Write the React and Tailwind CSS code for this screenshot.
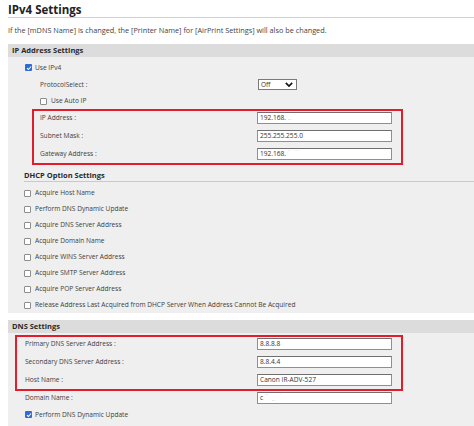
import React from 'react';

const Check = ({checked}) => (
    checked ? (
        <span className="flex w-[7px] h-[7px] shrink-0 items-center justify-center rounded-[1px] bg-[#2f6bd3]">
            <svg viewBox="0 0 8 8" className="w-[6px] h-[6px]">
                <path d="M1.3 4.2 L3.2 6 L6.8 2" fill="none" stroke="#fff" strokeWidth="1.4" />
            </svg>
        </span>
    ) : (
        <span className="w-[7px] h-[7px] shrink-0 rounded-[1px] border border-[#8c8c8c] bg-white" />
    )
);

const Field = ({children}) => (
    <div className="mt-[1px] h-[12px] w-[135px] border border-[#8f8f8f] border-t-[#6f6f6f] bg-white px-[2px] text-[6.6px] leading-[10px] text-[#333]">
        {children}
    </div>
);

const Row = ({label, width, children}) => (
    <div className="flex h-[18px] items-start">
        <span className="mt-[1px] leading-[11px] shrink-0" style={{width}}>{label}</span>
        {children}
    </div>
);

const CheckRow = ({label, checked}) => (
    <div className="flex h-[16px] items-center gap-[4px]">
        <Check checked={checked} />
        <span>{label}</span>
    </div>
);

const dhcp = [
    'Acquire Host Name',
    'Perform DNS Dynamic Update',
    'Acquire DNS Server Address',
    'Acquire Domain Name',
    'Acquire WINS Server Address',
    'Acquire SMTP Server Address',
    'Acquire POP Server Address',
    'Release Address Last Acquired from DHCP Server When Address Cannot Be Acquired',
];

export default function App() {
    return (
        <div className="w-[474px] h-[426px] overflow-hidden bg-white font-['Open_Sans','Noto_Sans',sans-serif] text-[6.6px] text-[#3d3d3d]">
            <div className="ml-[8px] h-[18px] border-b-[1.5px] border-[#d0d0d0] pt-[3px] text-[11.5px] font-bold leading-[14px] text-[#222]">
                IPv4 Settings
            </div>
            <div className="ml-[8px] flex h-[26px] items-center pb-[2px] text-[7.3px] text-[#444]">
                If the [mDNS Name] is changed, the [Printer Name] for [AirPrint Settings] will also be changed.
            </div>

            <div className="ml-[8px] h-[269px] bg-[#efefef]">
                <div className="flex h-[13px] items-center bg-[#dcdcdc] pl-[4px] text-[7.5px] font-bold text-[#2a2a2a]">
                    IP Address Settings
                </div>
                <div className="pt-[2px]">
                    <div className="flex h-[17px] items-center gap-[3px] pl-[17px]">
                        <Check checked />
                        <span>Use IPv4</span>
                    </div>
                    <div className="flex h-[17px] items-center pl-[32px]">
                        <span className="w-[218px]">ProtocolSelect :</span>
                        <div className="flex h-[11px] w-[39px] items-center justify-between border border-[#7a7a7a] bg-white pl-[2px] pr-[3px] text-[6.5px] text-[#333]">
                            <span>Off</span>
                            <svg viewBox="0 0 10 6" className="w-[8px] h-[5px]">
                                <path d="M1 1 L5 5 L9 1" fill="none" stroke="#111" strokeWidth="2" />
                            </svg>
                        </div>
                    </div>
                    <div className="flex h-[16px] items-center gap-[4px] pl-[32px]">
                        <Check />
                        <span>Use Auto IP</span>
                    </div>
                </div>

                <div className="ml-[24px] w-[371px] border-2 border-[#e11d2b] pl-[6px]">
                    <Row label="IP Address :" width={217}>
                        <Field>192.168.<span className="text-[#c4c4c4]"> ..</span></Field>
                    </Row>
                    <Row label="Subnet Mask :" width={217}>
                        <Field>255.255.255.0</Field>
                    </Row>
                    <div className="h-[16px] overflow-hidden">
                        <Row label="Gateway Address :" width={217}>
                            <Field>192.168.<span className="text-[#d2d2d2]">&nbsp;˙˙ &nbsp; ˙˙</span></Field>
                        </Row>
                    </div>
                </div>

                <div className="ml-[16px] mt-[4px] flex h-[13px] items-center border-b border-[#c9c9c9] pt-[1px] text-[7.5px] font-bold text-[#2a2a2a]">
                    DHCP Option Settings
                </div>
                <div className="mt-[3px] pl-[16px]">
                    {dhcp.map((label) => (
                        <CheckRow key={label} label={label} />
                    ))}
                </div>
            </div>

            <div className="ml-[8px] mt-[7px] h-[106px] bg-[#efefef]">
                <div className="flex h-[13px] items-center bg-[#dcdcdc] pl-[4px] text-[7.5px] font-bold text-[#2a2a2a]">
                    DNS Settings
                </div>
                <div className="ml-[7px] mt-[2px] w-[388px] border-2 border-[#e11d2b] pl-[8px]">
                    <Row label="Primary DNS Server Address :" width={232}>
                        <Field>8.8.8.8</Field>
                    </Row>
                    <Row label="Secondary DNS Server Address :" width={232}>
                        <Field>8.8.4.4</Field>
                    </Row>
                    <div className="h-[16px] overflow-hidden">
                        <Row label="Host Name :" width={232}>
                            <Field>Canon IR-ADV-527</Field>
                        </Row>
                    </div>
                </div>
                <div className="pl-[17px]">
                    <Row label="Domain Name :" width={232}>
                        <Field>c<span className="text-[#d2d2d2]">&nbsp;˙˙˙ &nbsp;_ &nbsp; ˙</span></Field>
                    </Row>
                    <div className="flex h-[16px] items-start gap-[3px] pt-[2px]">
                        <Check checked />
                        <span className="-mt-[2px] leading-[11px]">Perform DNS Dynamic Update</span>
                    </div>
                </div>
            </div>
        </div>
    );
}
